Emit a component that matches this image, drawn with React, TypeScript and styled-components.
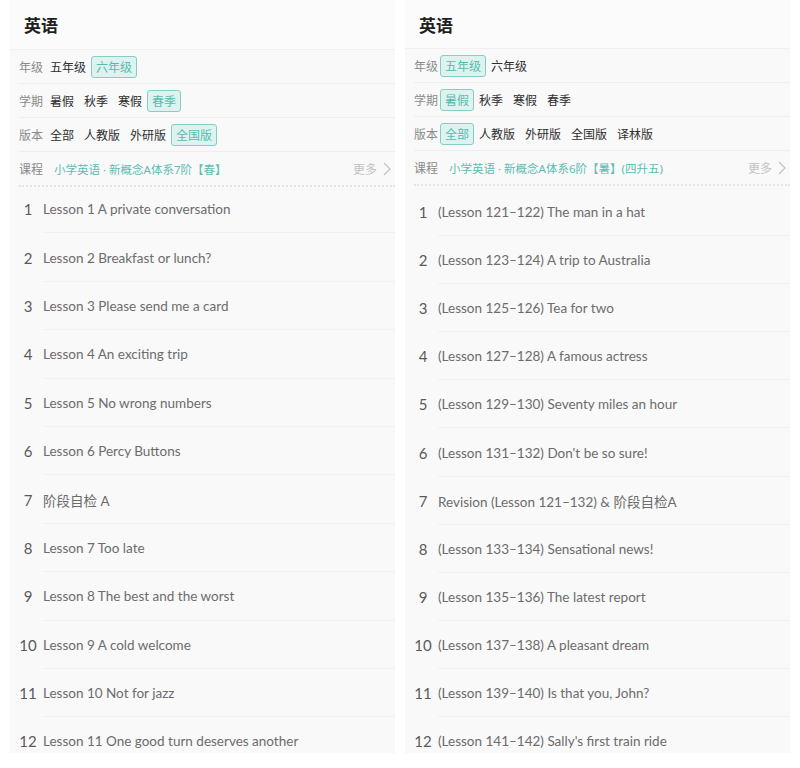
import React from "react";
import styled, { createGlobalStyle } from "styled-components";

const GlobalStyle = createGlobalStyle`
  html, body {
    margin: 0;
    padding: 0;
    background: #ffffff;
  }
  body {
    font-family: "Noto Sans", "Noto Sans CJK SC", sans-serif;
  }
`;

const Page = styled.div`
  display: grid;
  grid-template-columns: 385px 385px;
  gap: 10px;
  padding: 0 10px;
  height: 768px;
`;

const Panel = styled.div`
  height: 753px;
  overflow: hidden;
  background: #f9f9f9;
  display: flex;
  flex-direction: column;
  & > * {
    flex-shrink: 0;
  }
`;

const Header = styled.div<{ $h: number }>`
  height: ${(p) => p.$h}px;
  box-sizing: border-box;
  display: flex;
  align-items: center;
  padding-left: 14px;
  background: #fbfbfb;
  border-bottom: 1px solid #f0f0f0;
  font-family: "Noto Sans CJK SC", sans-serif;
  font-size: 17px;
  font-weight: 700;
  color: #1f1f1f;
`;

const FilterRow = styled.div`
  height: 34px;
  box-sizing: border-box;
  margin-left: 9px;
  display: flex;
  align-items: center;
  border-bottom: 1px solid #eeeeee;
`;

const Label = styled.span`
  font-family: "Noto Sans CJK SC", sans-serif;
  font-size: 12px;
  color: #8a8a8a;
  width: 26px;
  flex-shrink: 0;
`;

const Option = styled.span<{ $active?: boolean }>`
  font-family: "Noto Sans CJK SC", sans-serif;
  font-size: 12px;
  height: 22px;
  box-sizing: border-box;
  display: inline-flex;
  align-items: center;
  padding: 0 4px;
  border-radius: 3px;
  border: 1px solid ${(p) => (p.$active ? "#84cfc5" : "transparent")};
  background: ${(p) => (p.$active ? "#def3ef" : "transparent")};
  color: ${(p) => (p.$active ? "#56bcb0" : "#2e2e2e")};
`;

const CourseRow = styled.div`
  height: 35px;
  box-sizing: border-box;
  margin-left: 9px;
  padding-right: 4px;
  display: flex;
  align-items: center;
  border-bottom: 2px dotted #e4e4e4;
`;

const CourseName = styled.span`
  font-family: "Noto Sans", "Noto Sans CJK SC", sans-serif;
  font-size: 11.5px;
  color: #5cbdb1;
  margin-left: 9px;
  flex: 1;
  white-space: nowrap;
`;

const More = styled.span`
  font-family: "Noto Sans CJK SC", sans-serif;
  font-size: 12px;
  color: #c2c2c2;
  display: inline-flex;
  align-items: center;
  gap: 6px;
`;

const List = styled.div<{ $offset: number }>`
  display: flex;
  flex-direction: column;
  margin-top: ${(p) => p.$offset}px;
`;

const Item = styled.div<{ $h: number }>`
  height: ${(p) => p.$h}px;
  flex-shrink: 0;
  display: flex;
  align-items: center;
  position: relative;
  &::after {
    content: "";
    position: absolute;
    left: 33px;
    right: 0;
    bottom: 0;
    border-bottom: 1px solid #f1f1f1;
  }
`;

const Num = styled.span`
  width: 36px;
  text-align: center;
  font-family: Lato, "Noto Sans", sans-serif;
  font-size: 15px;
  color: #5a5a5a;
  flex-shrink: 0;
`;

const Title = styled.span`
  font-family: Lato, "Noto Sans CJK SC", sans-serif;
  font-size: 13.5px;
  color: #6c6c6c;
  margin-left: -3px;
  white-space: nowrap;
`;

const Chevron = () => (
  <svg width="8" height="14" viewBox="0 0 8 14" fill="none">
    <path d="M1 1l6 6-6 6" stroke="#c2c2c2" strokeWidth="1.2" />
  </svg>
);

type Filter = { label: string; options: string[]; active: number };

type PanelData = {
  headerH: number;
  filters: Filter[];
  course: string;
  listOffset: number;
  itemH: number;
  lessons: string[];
};

const left: PanelData = {
  headerH: 50,
  filters: [
    { label: "年级", options: ["五年级", "六年级"], active: 1 },
    { label: "学期", options: ["暑假", "秋季", "寒假", "春季"], active: 3 },
    { label: "版本", options: ["全部", "人教版", "外研版", "全国版"], active: 3 },
  ],
  course: "小学英语 · 新概念A体系7阶【春】",
  listOffset: -2,
  itemH: 48.4,
  lessons: [
    "Lesson 1 A private conversation",
    "Lesson 2 Breakfast or lunch?",
    "Lesson 3 Please send me a card",
    "Lesson 4 An exciting trip",
    "Lesson 5 No wrong numbers",
    "Lesson 6 Percy Buttons",
    "阶段自检 A",
    "Lesson 7 Too late",
    "Lesson 8 The best and the worst",
    "Lesson 9 A cold welcome",
    "Lesson 10 Not for jazz",
    "Lesson 11 One good turn deserves another",
  ],
};

const right: PanelData = {
  headerH: 49,
  filters: [
    { label: "年级", options: ["五年级", "六年级"], active: 0 },
    { label: "学期", options: ["暑假", "秋季", "寒假", "春季"], active: 0 },
    { label: "版本", options: ["全部", "人教版", "外研版", "全国版", "译林版"], active: 0 },
  ],
  course: "小学英语 · 新概念A体系6阶【暑】(四升五)",
  listOffset: 2,
  itemH: 48.1,
  lessons: [
    "(Lesson 121–122) The man in a hat",
    "(Lesson 123–124) A trip to Australia",
    "(Lesson 125–126) Tea for two",
    "(Lesson 127–128) A famous actress",
    "(Lesson 129–130) Seventy miles an hour",
    "(Lesson 131–132) Don't be so sure!",
    "Revision (Lesson 121–132) & 阶段自检A",
    "(Lesson 133–134) Sensational news!",
    "(Lesson 135–136) The latest report",
    "(Lesson 137–138) A pleasant dream",
    "(Lesson 139–140) Is that you, John?",
    "(Lesson 141–142) Sally's first train ride",
  ],
};

function CoursePanel({ data }: { data: PanelData }) {
  return (
    <Panel>
      <Header $h={data.headerH}>英语</Header>
      {data.filters.map((f) => (
        <FilterRow key={f.label}>
          <Label>{f.label}</Label>
          {f.options.map((o, i) => (
            <Option key={o} $active={i === f.active}>
              {o}
            </Option>
          ))}
        </FilterRow>
      ))}
      <CourseRow>
        <Label>课程</Label>
        <CourseName>{data.course}</CourseName>
        <More>
          更多 <Chevron />
        </More>
      </CourseRow>
      <List $offset={data.listOffset}>
        {data.lessons.map((l, i) => (
          <Item key={i} $h={data.itemH}>
            <Num>{i + 1}</Num>
            <Title>{l}</Title>
          </Item>
        ))}
      </List>
    </Panel>
  );
}

export default function App() {
  return (
    <>
      <GlobalStyle />
      <Page>
        <CoursePanel data={left} />
        <CoursePanel data={right} />
      </Page>
    </>
  );
}
